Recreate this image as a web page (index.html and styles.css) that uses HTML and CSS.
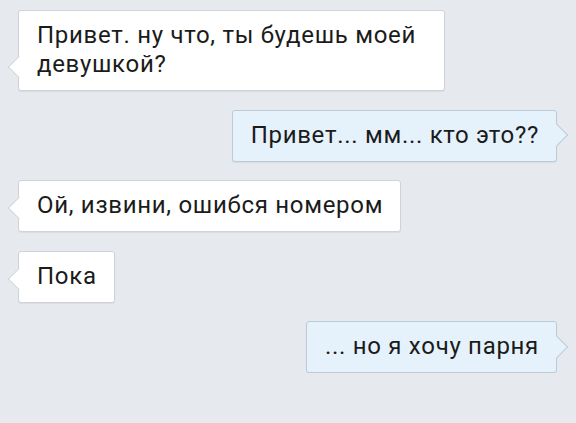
FILE: index.html
```html
<!doctype html>
<html lang="ru">
  <head>
    <meta charset="utf-8">
    <meta name="viewport" content="width=device-width, initial-scale=1">
    <title>Переписка</title>
    <link rel="stylesheet" href="styles.css">
  </head>
<body>
    <div class="chat">
        <div class="msg in">Привет. ну что, ты будешь моей девушкой?</div>
        <div class="msg out">Привет... мм... кто это??</div>
        <div class="msg in">Ой, извини, ошибся номером</div>
        <div class="msg in">Пока</div>
        <div class="msg out">... но я хочу парня</div>
    </div>
</body>
</html>
```

FILE: styles.css
```css
body {
    margin: 0;
    background-color: #e6e9ee;
    font-family: Roboto, "Noto Sans", sans-serif;
}

.chat {
    display: flex;
    flex-direction: column;
    align-items: flex-start;
    gap: 18.5px;
    padding: 10px 19px 0 18px;
}

.msg {
    position: relative;
    box-sizing: border-box;
    max-width: 427px;
    padding: 10px 17px 11px 18px;
    font-size: 24px;
    letter-spacing: 0.7px;
    line-height: 29px;
    color: #1b1b1b;
    border: 1px solid #cfd3d9;
    border-radius: 3px;
    box-shadow: 0 1px 1px rgba(0, 0, 0, 0.06);
}

.msg::before {
    content: "";
    position: absolute;
    width: 15px;
    height: 15px;
    background-color: inherit;
    transform: rotate(45deg);
}

.in {
    background-color: #ffffff;
}

.in::before {
    left: -8.5px;
    bottom: 15px;
    border-left: 1px solid #cfd3d9;
    border-bottom: 1px solid #cfd3d9;
}

.out {
    align-self: flex-end;
    background-color: #e5f2fc;
    border-color: #bccbd8;
}

.out::before {
    right: -8.5px;
    top: 50%;
    margin-top: -8.5px;
    border-right: 1px solid #bccbd8;
    border-top: 1px solid #bccbd8;
}
```
